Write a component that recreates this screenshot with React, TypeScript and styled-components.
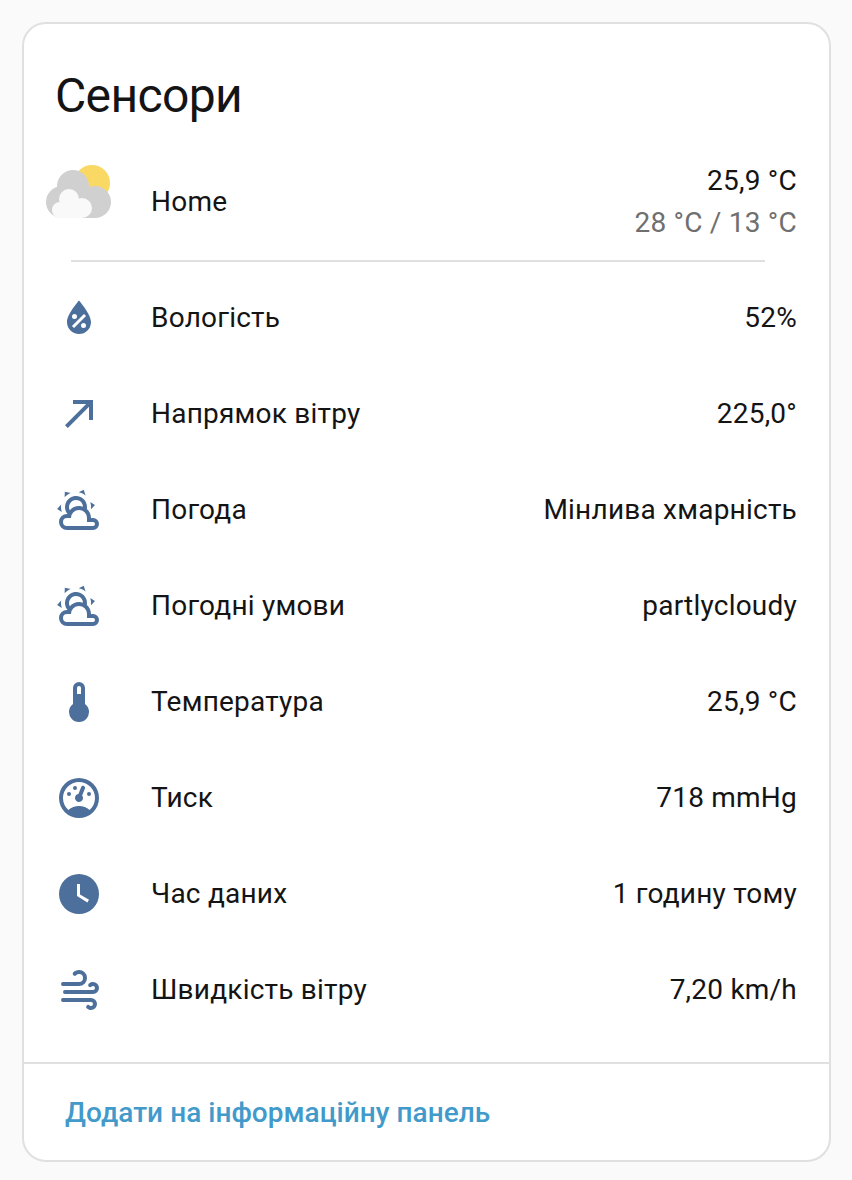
import React from "react";
import styled, { createGlobalStyle } from "styled-components";

const GlobalStyle = createGlobalStyle`
  html, body {
    margin: 0;
    background: #fafafa;
  }
  body {
    font-family: Roboto, "Noto Sans", sans-serif;
    color: #141414;
    -webkit-font-smoothing: antialiased;
  }
`;

const Page = styled.div`
  box-sizing: border-box;
  width: 852px;
  height: 1180px;
  padding: 22px 21px 0 22px;
`;

const Card = styled.section`
  box-sizing: border-box;
  height: 1140px;
  display: flex;
  flex-direction: column;
  background: #fff;
  border: 2px solid #e0e0e0;
  border-radius: 24px;
`;

const Title = styled.h1`
  margin: 0;
  padding: 40px 31px 0;
  height: 114px;
  box-sizing: border-box;
  font-size: 48px;
  line-height: 64px;
  font-weight: 400;
  letter-spacing: -0.65px;
`;

const Content = styled.div`
  padding: 0 32px;
`;

const WeatherRow = styled.div`
  box-sizing: border-box;
  display: flex;
  align-items: center;
  height: 122px;
  padding-top: 4px;
  margin-left: -10px;
  font-size: 28px;
  letter-spacing: 0.22px;
`;

const WeatherArt = styled.svg`
  width: 66px;
  height: 56px;
  flex: none;
  margin-top: -18px;
`;

const WeatherName = styled.div`
  margin-left: 39px;
  flex: 1;
`;

const WeatherValues = styled.div`
  text-align: right;
  line-height: 42px;
  padding-top: 2px;
`;

const Forecast = styled.div`
  color: #6f6f6f;
`;

const Divider = styled.hr`
  margin: 0 32px 8px 15px;
  border: none;
  height: 2px;
  background: #e0e0e0;
`;

const Row = styled.div`
  display: flex;
  align-items: center;
  height: 96px;
  font-size: 28px;
  letter-spacing: 0.22px;
`;

const IconBox = styled.svg`
  width: 48px;
  height: 48px;
  flex: none;
  margin-left: -1px;
  fill: #4c6f9b;
`;

const Name = styled.div`
  margin-left: 48px;
  padding-bottom: 2px;
  flex: 1;
`;

const Value = styled.div`
  padding-bottom: 2px;
`;

const Footer = styled.div`
  margin-top: auto;
  height: 98px;
  box-sizing: border-box;
  border-top: 2px solid #e0e0e0;
  padding: 0 41px;
  display: flex;
  align-items: center;
`;

const AddLink = styled.a`
  color: #429acb;
  font-size: 28px;
  font-weight: 500;
  letter-spacing: 0.03px;
`;

const partlyCloudy =
  "M12.74,5.47C15.1,6.5 16.35,9.03 15.92,11.46C17.19,12.56 18,14.19 18,16V16.17C18.31,16.06 18.65,16 19,16A3,3 0 0,1 22,19A3,3 0 0,1 19,22H6A4,4 0 0,1 2,18A4,4 0 0,1 6,14H6.27C5,12.45 4.6,10.24 5.5,8.26C6.72,5.5 9.97,4.24 12.74,5.47M11.93,7.3C10.16,6.5 8.09,7.31 7.31,9.07C6.85,10.09 6.93,11.22 7.41,12.13C8.5,10.83 10.16,10 12,10C12.7,10 13.38,10.12 14,10.34C13.94,9.06 13.18,7.86 11.93,7.3M13.55,3.64C13,3.4 12.45,3.23 11.88,3.12L14.37,1.82L15.27,4.71C14.76,4.29 14.19,3.93 13.55,3.64M6.09,4.44C5.6,4.79 5.17,5.19 4.8,5.63L4.91,2.82L7.87,3.5C7.25,3.71 6.65,4.03 6.09,4.44M18,9.71C17.91,9.12 17.78,8.55 17.59,8L19.97,9.5L17.92,11.73C18.03,11.08 18.05,10.4 18,9.71M3.04,11.3C3.11,11.9 3.24,12.47 3.43,13L1.06,11.5L3.1,9.28C3,9.93 2.97,10.61 3.04,11.3M19,18H16V16A4,4 0 0,0 12,12A4,4 0 0,0 8,16H6A2,2 0 0,0 4,18A2,2 0 0,0 6,20H19A1,1 0 0,0 20,19A1,1 0 0,0 19,18Z";

const sensors = [
  {
    name: "Вологість",
    value: "52%",
    icon: "M12,3.25C12,3.25 6,10 6,14C6,17.32 8.69,20 12,20A6,6 0 0,0 18,14C18,10 12,3.25 12,3.25M14.47,9.97L15.53,11.03L9.53,17.03L8.47,15.97M9.75,10A1.25,1.25 0 0,1 11,11.25A1.25,1.25 0 0,1 9.75,12.5A1.25,1.25 0 0,1 8.5,11.25A1.25,1.25 0 0,1 9.75,10M14.25,14.5A1.25,1.25 0 0,1 15.5,15.75A1.25,1.25 0 0,1 14.25,17A1.25,1.25 0 0,1 13,15.75A1.25,1.25 0 0,1 14.25,14.5Z",
  },
  {
    name: "Напрямок вітру",
    value: "225,0°",
    icon: "M5,17.59L15.59,7H9V5H19V15H17V8.41L6.41,19L5,17.59Z",
  },
  { name: "Погода", value: "Мінлива хмарність", icon: partlyCloudy },
  { name: "Погодні умови", value: "partlycloudy", icon: partlyCloudy },
  {
    name: "Температура",
    value: "25,9 °C",
    icon: "M15 13V5A3 3 0 0 0 9 5V13A5 5 0 1 0 15 13M12 4A1 1 0 0 1 13 5V8H11V5A1 1 0 0 1 12 4Z",
  },
  {
    name: "Тиск",
    value: "718 mmHg",
    icon: "M12,2A10,10 0 0,0 2,12A10,10 0 0,0 12,22A10,10 0 0,0 22,12A10,10 0 0,0 12,2M12,4A8,8 0 0,1 20,12C20,14.4 19,16.5 17.3,18C15.9,16.7 14,16 12,16C10,16 8.2,16.7 6.7,18C5,16.5 4,14.4 4,12A8,8 0 0,1 12,4M14,5.89C13.62,5.9 13.26,6.15 13.1,6.54L11.81,9.77L11.71,10C11,10.13 10.41,10.6 10.14,11.26C9.73,12.29 10.23,13.45 11.26,13.86C12.29,14.27 13.45,13.77 13.86,12.74C14.12,12.08 14,11.32 13.57,10.76L13.67,10.5L14.96,7.29L14.97,7.26C15.17,6.75 14.92,6.17 14.41,5.96C14.28,5.91 14.15,5.89 14,5.89M10,6A1,1 0 0,0 9,7A1,1 0 0,0 10,8A1,1 0 0,0 11,7A1,1 0 0,0 10,6M7,9A1,1 0 0,0 6,10A1,1 0 0,0 7,11A1,1 0 0,0 8,10A1,1 0 0,0 7,9M17,9A1,1 0 0,0 16,10A1,1 0 0,0 17,11A1,1 0 0,0 18,10A1,1 0 0,0 17,9Z",
  },
  {
    name: "Час даних",
    value: "1 годину тому",
    icon: "M12,2A10,10 0 0,0 2,12A10,10 0 0,0 12,22A10,10 0 0,0 22,12A10,10 0 0,0 12,2M16.2,16.2L11,13V7H12.5V12.2L17,14.9L16.2,16.2Z",
  },
  {
    name: "Швидкість вітру",
    value: "7,20 km/h",
    icon: "M4,10A1,1 0 0,1 3,9A1,1 0 0,1 4,8H12A2,2 0 0,0 14,6A2,2 0 0,0 12,4C11.45,4 10.95,4.22 10.59,4.59C10.2,5 9.56,5 9.17,4.59C8.78,4.2 8.78,3.56 9.17,3.17C9.9,2.45 10.9,2 12,2A4,4 0 0,1 16,6A4,4 0 0,1 12,10H4M19,12A1,1 0 0,0 20,11A1,1 0 0,0 19,10C18.72,10 18.47,10.11 18.29,10.29C17.9,10.68 17.27,10.68 16.88,10.29C16.5,9.9 16.5,9.27 16.88,8.88C17.42,8.34 18.17,8 19,8A3,3 0 0,1 22,11A3,3 0 0,1 19,14H5A1,1 0 0,1 4,13A1,1 0 0,1 5,12H19M18,18H4A1,1 0 0,1 3,17A1,1 0 0,1 4,16H18A3,3 0 0,1 21,19A3,3 0 0,1 18,22C17.17,22 16.42,21.66 15.88,21.12C15.5,20.73 15.5,20.1 15.88,19.71C16.27,19.32 16.9,19.32 17.29,19.71C17.47,19.89 17.72,20 18,20A1,1 0 0,0 19,19A1,1 0 0,0 18,18Z",
  },
];

export default function App() {
  return (
    <Page>
      <GlobalStyle />
      <Card>
        <Title>Сенсори</Title>
        <Content>
          <WeatherRow>
            {/* drawn in picture coordinates: x 46-112, y 164-220 */}
            <WeatherArt viewBox="46 164 66 56">
              <circle cx="92" cy="183" r="18" fill="#f9d964" />
              <g fill="#d0d0d0">
                <circle cx="73" cy="186" r="16" />
                <circle cx="62" cy="202" r="16" />
                <circle cx="95" cy="202" r="16" />
                <rect x="62" y="190" width="33" height="28" />
              </g>
              <g fill="#f9f9f9">
                <circle cx="69" cy="199" r="10" />
                <circle cx="60" cy="210" r="8" />
                <circle cx="82" cy="208" r="10" />
                <rect x="60" y="200" width="22" height="18" />
              </g>
            </WeatherArt>
            <WeatherName>Home</WeatherName>
            <WeatherValues>
              <div>25,9 °C</div>
              <Forecast>28 °C / 13 °C</Forecast>
            </WeatherValues>
          </WeatherRow>
          <Divider />
          {sensors.map((s) => (
            <Row key={s.name}>
              <IconBox viewBox="0 0 24 24">
                <path d={s.icon} />
              </IconBox>
              <Name>{s.name}</Name>
              <Value>{s.value}</Value>
            </Row>
          ))}
        </Content>
        <Footer>
          <AddLink>Додати на інформаційну панель</AddLink>
        </Footer>
      </Card>
    </Page>
  );
}
